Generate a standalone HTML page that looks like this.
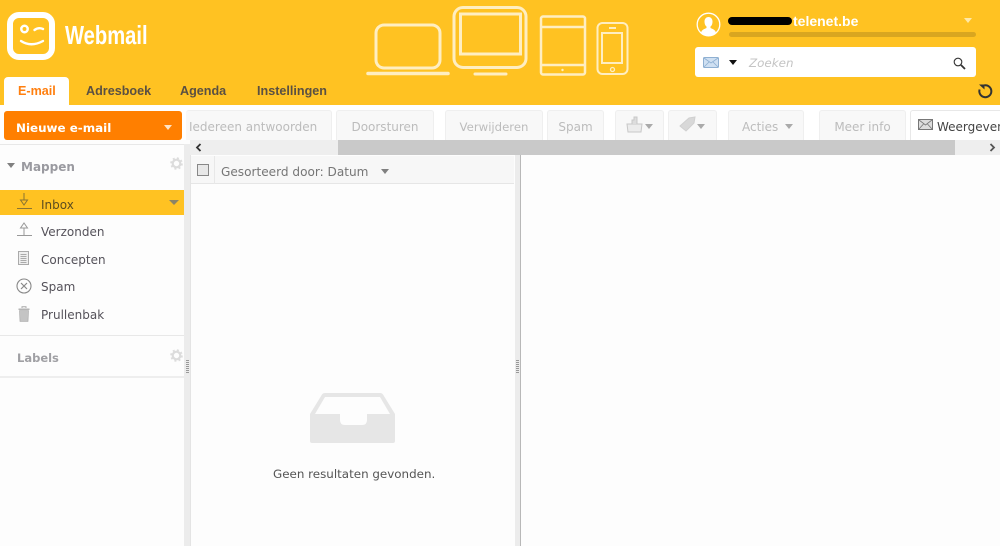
<!DOCTYPE html>
<html lang="nl">
<head>
<meta charset="utf-8">
<title>Webmail</title>
<style>
html,body{margin:0;padding:0;width:1000px;height:546px;overflow:hidden;background:#fdfdfd;}
body{position:relative;font-family:"DejaVu Sans","Liberation Sans",sans-serif;}
.a{position:absolute;}
.t{position:absolute;white-space:nowrap;line-height:16px;}
.btn{position:absolute;top:110px;height:30px;background:#f8f8f8;border:1px solid #efefef;border-bottom:none;border-radius:3px 3px 0 0;box-sizing:border-box;color:#bcbcbc;font-size:12px;line-height:33px;text-align:center;white-space:nowrap;font-family:"DejaVu Sans",sans-serif;}
.tab{position:absolute;top:83px;font:bold 12.6px/16px "Liberation Sans",sans-serif;color:#5a5042;white-space:nowrap;}
.nav{position:absolute;left:41px;font-size:12px;line-height:16px;color:#55525a;white-space:nowrap;}
.tri{position:absolute;width:0;height:0;border-left:5px solid transparent;border-right:5px solid transparent;border-top:5px solid #888;}
svg{position:absolute;overflow:visible;}
</style>
</head>
<body>
<!-- header -->
<div class="a" style="left:0;top:0;width:1000px;height:105px;background:#ffc222;"></div>

<svg style="left:0;top:0" width="60" height="65" viewBox="0 0 60 65">
<rect x="10" y="15" width="42" height="42" rx="9" fill="none" stroke="#fff" stroke-width="6"/>
<circle cx="24.500" cy="29" r="3.200" fill="none" stroke="#fff" stroke-width="2.500"/>
<path d="M34.500 30q4-3 8.500-1" fill="none" stroke="#fff" stroke-width="2.400" stroke-linecap="round"/>
<path d="M21 41q10 6.500 22 0" fill="none" stroke="#fff" stroke-width="2.400" stroke-linecap="round"/>
</svg>
<div class="t" style="left:65px;top:21px;font:bold 26px/28px 'Liberation Sans',sans-serif;color:#fff;transform:scaleX(.776);transform-origin:0 0;">Webmail</div>

<!-- devices -->
<svg style="left:350px;top:0;opacity:.72" width="300" height="90" viewBox="0 0 300 90" fill="none" stroke="#fff">
<rect x="26" y="25" width="64" height="43" rx="8" stroke-width="3"/>
<path d="M18 73.500h80" stroke-width="3.500" stroke-linecap="round"/>
<rect x="104" y="7.500" width="72" height="60" rx="9" stroke-width="3"/>
<rect x="110.500" y="14" width="60" height="40" stroke-width="3"/>
<path d="M125 74h31" stroke-width="3" stroke-linecap="round"/>
<rect x="191" y="16.500" width="44" height="58" rx="2" stroke-width="2.500"/>
<path d="M191 27h44M191 65h44" stroke-width="2.500"/>
<circle cx="212.500" cy="70" r="1.200" fill="#fff" stroke="none"/>
<rect x="247.500" y="23" width="30" height="51" rx="5" stroke-width="2"/>
<rect x="252" y="33" width="20" height="30" stroke-width="2"/>
<path d="M259 28h7" stroke-width="2"/>
<circle cx="262.500" cy="69.500" r="2" stroke-width="1.300"/>
</svg>

<!-- user -->
<svg style="left:696px;top:12px" width="25" height="25" viewBox="0 0 25 25">
<circle cx="12.500" cy="12.500" r="11.300" fill="none" stroke="#fff" stroke-width="1.300"/>
<path d="M5 21c.5-3.500 3.500-3.800 5.500-5v-1.500c-1.500-1-2-3-2-5 0-2.500 1.500-4.500 4-4.500s4 2 4 4.500c0 2-.5 4-2 5V16c2 1.200 5 1.500 5.500 5-2 1.700-4.500 2.800-7.500 2.800S7 22.700 5 21z" fill="#fff"/>
</svg>
<div class="t" style="left:793px;top:13px;font:bold 14px/16px 'Liberation Sans',sans-serif;color:#fff;">telenet.be</div>
<div class="a" style="left:728px;top:17px;width:64px;height:8px;background:#000;border-radius:4px;"></div>
<div class="tri" style="left:964px;top:18px;border-top-color:#ffe9a8;border-left-width:4.500px;border-right-width:4.500px;"></div>
<div class="a" style="left:729px;top:32px;width:247px;height:5px;background:#d9a620;border-radius:3px;"></div>

<!-- search -->
<div class="a" style="left:695px;top:47px;width:281px;height:30px;background:#fff;border-radius:3px;"></div>
<svg style="left:703px;top:57px" width="16" height="11" viewBox="0 0 16 11">
<rect x=".5" y=".5" width="15" height="10" rx="1" fill="#cfe0f2" stroke="#8fb0d2"/>
<path d="M1 1l7 5 7-5M1 10l5-5M15 10l-5-5" fill="none" stroke="#8fb0d2" stroke-width=".8"/>
</svg>
<div class="tri" style="left:729px;top:60px;border-top-color:#111;border-left-width:4px;border-right-width:4px;"></div>
<div class="t" style="left:749px;top:55px;font:italic 11.900px/16px 'DejaVu Sans',sans-serif;color:#c4c4c4;">Zoeken</div>
<svg style="left:953px;top:57px" width="13" height="13" viewBox="0 0 13 13">
<circle cx="5" cy="5" r="3.800" fill="none" stroke="#333" stroke-width="1.100"/>
<path d="M8 8l4 4" stroke="#333" stroke-width="1.800"/>
</svg>
<svg style="left:977px;top:83px" width="16" height="16" viewBox="0 0 16 16">
<path d="M7.500 2.300A6 6 0 1 1 2.600 6.500" fill="none" stroke="#333" stroke-width="2"/>
<path d="M2 1.500h5.500V6.500z" fill="#333"/>
</svg>

<!-- tabs -->
<div class="a" style="left:4px;top:77px;width:65px;height:28px;background:#fff;border-radius:4px 4px 0 0;"></div>
<div class="tab" style="left:18px;color:#ff7f0f;">E-mail</div>
<div class="tab" style="left:86px;">Adresboek</div>
<div class="tab" style="left:180px;">Agenda</div>
<div class="tab" style="left:257px;">Instellingen</div>

<!-- toolbar -->
<div class="a" style="left:0;top:105px;width:1000px;height:35px;background:#fff;"></div>
<div class="btn" style="left:186px;width:146px;border-left:none;"><span style="position:absolute;left:3px;">Iedereen antwoorden</span></div>
<div class="btn" style="left:336px;width:98px;">Doorsturen</div>
<div class="btn" style="left:445px;width:98px;font-size:11.700px;">Verwijderen</div>
<div class="btn" style="left:547px;width:57px;">Spam</div>
<div class="btn" style="left:615px;width:49px;"></div>
<svg style="left:626px;top:116px" width="17" height="17" viewBox="0 0 17 17">
<path d="M1 8h15l-1 8H2z" fill="#ececec" stroke="#c8c8c8"/>
<path d="M6 8V4h2V1h3v7" fill="#ddd" stroke="#c8c8c8"/>
</svg>
<div class="tri" style="left:645px;top:124px;border-top-color:#aaa;border-left-width:4px;border-right-width:4px;"></div>
<div class="btn" style="left:668px;width:49px;"></div>
<svg style="left:679px;top:116px" width="17" height="17" viewBox="0 0 17 17">
<path d="M1 10L10 2l6-1-1 6-8 8z" fill="#d8d8d8" stroke="#d0d0d0"/>
</svg>
<div class="tri" style="left:697px;top:124px;border-top-color:#aaa;border-left-width:4px;border-right-width:4px;"></div>
<div class="btn" style="left:728px;width:76px;"><span style="position:absolute;left:13px;">Acties</span></div>
<div class="tri" style="left:785px;top:124px;border-top-color:#aaa;border-left-width:4px;border-right-width:4px;"></div>
<div class="btn" style="left:819px;width:87px;">Meer info</div>
<div class="a" style="left:910px;top:110px;width:90px;height:30px;background:#fff;border:1px solid #e8e8e8;border-right:none;border-bottom:none;border-radius:3px 0 0 0;box-sizing:border-box;"></div>
<svg style="left:918px;top:119px" width="15" height="11" viewBox="0 0 15 11">
<rect x=".5" y=".5" width="14" height="10" fill="#ddd" stroke="#777"/>
<path d="M1 1l6.500 5L14 1M1 10l4.500-5M14 10L9.500 5" fill="none" stroke="#777" stroke-width=".8"/>
</svg>
<div class="t" style="left:937px;top:119px;font-size:12px;color:#444;">Weergeven</div>

<!-- scrollbar -->
<div class="a" style="left:190px;top:140px;width:810px;height:15px;background:#eeeeee;"></div>
<div class="a" style="left:338px;top:140px;width:617px;height:15px;background:#c9c9c9;"></div>
<svg style="left:195px;top:143px" width="7" height="9" viewBox="0 0 7 9"><path d="M5.500 1L2 4.500 5.500 8" fill="none" stroke="#333" stroke-width="1.800"/></svg>
<svg style="left:989px;top:143px" width="7" height="9" viewBox="0 0 7 9"><path d="M1.500 1L5 4.500 1.500 8" fill="none" stroke="#555" stroke-width="1.800"/></svg>

<!-- new mail -->
<div class="a" style="left:4px;top:111px;width:178px;height:29px;background:#ff7f00;border-radius:3px;"></div>
<div class="t" style="left:16px;top:120px;font:bold 11.900px/16px 'DejaVu Sans',sans-serif;color:#fff;">Nieuwe e-mail</div>
<div class="tri" style="left:164px;top:125px;border-top-color:#ffe3c4;border-left-width:4px;border-right-width:4px;"></div>

<!-- sidebar -->
<div class="a" style="left:0;top:144px;width:184px;height:402px;background:#fdfdfd;border-top:1px solid #e8e8e8;box-sizing:border-box;"></div>
<div class="a" style="left:184px;top:144px;width:6px;height:402px;background:#ececec;"></div>
<div class="tri" style="left:7px;top:163px;border-top-color:#808080;border-left-width:4px;border-right-width:4px;"></div>
<div class="t" style="left:21px;top:159px;font:bold 12px/16px 'DejaVu Sans',sans-serif;color:#9a9aa0;">Mappen</div>
<svg style="left:170px;top:157px" width="13" height="13" viewBox="0 0 13 13">
<circle cx="6.500" cy="6.500" r="3.800" fill="none" stroke="#dcdcdc" stroke-width="2.200"/>
<circle cx="6.500" cy="6.500" r="5.300" fill="none" stroke="#dcdcdc" stroke-width="2" stroke-dasharray="2 2.200"/>
</svg>

<div class="a" style="left:0;top:190px;width:184px;height:25px;background:#ffc222;"></div>
<div class="tri" style="left:169px;top:200px;border-top-color:#8c8466;"></div>
<svg style="left:16px;top:192px" width="16" height="20" viewBox="0 0 16 20" fill="none" stroke="#8a7432">
<path d="M8 1v7M4.500 8h7L8 13zM1 16.500h15" stroke-width="1"/>
</svg>
<div class="nav" style="top:197px;color:#5c4c20;">Inbox</div>

<svg style="left:16px;top:221px" width="16" height="20" viewBox="0 0 16 20" fill="none" stroke="#999">
<path d="M8 14.500V7M4.500 7h7L8 2zM1 14.500h15" stroke-width="1"/>
</svg>
<div class="nav" style="top:224px;">Verzonden</div>

<svg style="left:18px;top:251px" width="12" height="15" viewBox="0 0 12 15">
<rect x=".5" y=".5" width="10" height="13" fill="#eee" stroke="#aaa"/>
<path d="M2.500 3.500h6M2.500 5.500h6M2.500 7.500h6M2.500 9.500h6M2.500 11.500h6" stroke="#aaa" stroke-width="1"/>
</svg>
<div class="nav" style="top:252px;">Concepten</div>

<svg style="left:16px;top:278px" width="16" height="16" viewBox="0 0 16 16" fill="none" stroke="#888">
<circle cx="8" cy="8" r="7" stroke-width="1.100"/>
<path d="M5 5l6 6M11 5l-6 6" stroke-width="1.200"/>
</svg>
<div class="nav" style="top:279px;">Spam</div>

<svg style="left:18px;top:306px" width="12" height="16" viewBox="0 0 12 16">
<path d="M4 2V.8h4V2" fill="none" stroke="#aaa"/>
<path d="M.5 2.500h11v1.500h-11z" fill="#b4b4b4"/>
<path d="M1.500 4.500h9L10 15.500H2z" fill="#c4c4c4" stroke="#a4a4a4" stroke-width=".6"/>
</svg>
<div class="nav" style="top:307px;">Prullenbak</div>

<div class="a" style="left:0;top:335px;width:184px;height:1px;background:#e8e8e8;"></div>
<div class="t" style="left:17px;top:350px;font:bold 11.500px/16px 'DejaVu Sans',sans-serif;color:#a0a0a4;">Labels</div>
<svg style="left:170px;top:349px" width="13" height="13" viewBox="0 0 13 13">
<circle cx="6.500" cy="6.500" r="3.800" fill="none" stroke="#dcdcdc" stroke-width="2.200"/>
<circle cx="6.500" cy="6.500" r="5.300" fill="none" stroke="#dcdcdc" stroke-width="2" stroke-dasharray="2 2.200"/>
</svg>
<div class="a" style="left:0;top:376px;width:184px;height:2px;background:#eeeeee;"></div>
<div class="a" style="left:186px;top:360px;width:3px;height:13px;background:repeating-linear-gradient(#999 0 1px,transparent 1px 2px);"></div>

<!-- list -->
<div class="a" style="left:190px;top:155px;width:325px;height:391px;background:#fdfdfd;border-left:1px solid #e4e4e4;box-sizing:border-box;"></div>
<div class="a" style="left:191px;top:156px;width:323px;height:28px;background:#f7f7f7;border-bottom:1px solid #e6e6e6;box-sizing:border-box;"></div>
<div class="a" style="left:214px;top:156px;width:1px;height:28px;background:#e8e8e8;"></div>
<div class="a" style="left:197px;top:164px;width:12px;height:12px;background:#e8e8e8;border:1px solid #888;box-sizing:border-box;"></div>
<div class="t" style="left:221px;top:164px;font-size:12.100px;color:#767676;">Gesorteerd door: Datum</div>
<div class="tri" style="left:381px;top:169px;border-top-color:#808080;border-left-width:4.500px;border-right-width:4.500px;"></div>

<svg style="left:310px;top:393px" width="85" height="50" viewBox="0 0 85 50">
<path d="M0 21L12 1.500Q13 0 15 0H70Q72 0 73 1.500L85 21V48Q85 50 83 50H2Q0 50 0 48z" fill="#e6e6e6"/>
<path d="M5 21L15 4H70L80 21z" fill="#fdfdfd"/>
<path d="M30 21h27v6q0 5-5 5H35q-5 0-5-5z" fill="#fdfdfd"/>
</svg>
<div class="t" style="left:273px;top:466px;font-size:11.900px;color:#555;">Geen resultaten gevonden.</div>

<!-- splitter and pane -->
<div class="a" style="left:515px;top:155px;width:6px;height:391px;background:#ececec;border-right:1px solid #b8b8b8;box-sizing:border-box;"></div>
<div class="a" style="left:516px;top:360px;width:3px;height:13px;background:repeating-linear-gradient(#999 0 1px,transparent 1px 2px);"></div>
<div class="a" style="left:521px;top:155px;width:479px;height:391px;background:#fdfdfd;"></div>
</body>
</html>
